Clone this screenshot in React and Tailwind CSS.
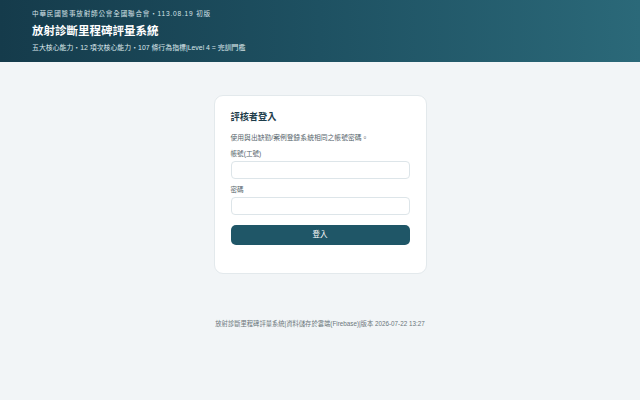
export default function App() {
  const font = { fontFamily: '"Liberation Sans", "Noto Sans CJK TC", sans-serif' };
  return (
    <div className="w-[640px] h-[400px] bg-[#f2f5f7] flex flex-col" style={font}>
      <header className="h-[62px] bg-gradient-to-r from-[#153b4b] via-[#1e5162] to-[#2b6979] px-[32px] flex flex-col justify-center">
        <div className="text-[6.6px] leading-[10px] tracking-[0.12em] text-[#d5e2e7]">中華民國醫事放射師公會全國聯合會・113.08.19 初版</div>
        <div className="mt-[4px] text-[11.5px] leading-[16px] font-bold text-white">放射診斷里程碑評量系統</div>
        <div className="mt-[4px] text-[6.9px] leading-[10px] text-[#dbe7eb]">五大核心能力・12 項次核心能力・107 條行為指標|Level 4 = 完訓門檻</div>
      </header>
      <main className="flex-1 flex flex-col items-center">
        <div className="mt-[33px] w-[213px] h-[179px] bg-white rounded-[9px] border border-[#e3e9ec] px-[16px] pt-[15px]">
          <div className="text-[9.2px] leading-[13px] font-bold text-[#1d3c4a]">評核者登入</div>
          <div className="mt-[9px] text-[6.8px] leading-[10px] text-[#55646b]">使用與出缺勤/案例登錄系統相同之帳號密碼。</div>
          <div className="mt-[6px] text-[6.6px] leading-[10px] text-[#55646b]">帳號(工號)</div>
          <div className="mt-[2px] h-[18px] rounded-[4px] border border-[#dde5e9] bg-white"></div>
          <div className="mt-[6px] text-[6.6px] leading-[10px] text-[#55646b]">密碼</div>
          <div className="mt-[2px] h-[18px] rounded-[4px] border border-[#dde5e9] bg-white"></div>
          <button className="mt-[10px] w-full h-[20px] rounded-[5px] bg-[#1f5667] text-white text-[7.5px] leading-[20px]">登入</button>
        </div>
        <div className="mt-[45px] text-[6.3px] leading-[10px] text-[#6b767b]">放射診斷里程碑評量系統|資料儲存於雲端(Firebase)|版本 2026-07-22 13:27</div>
      </main>
    </div>
  );
}
